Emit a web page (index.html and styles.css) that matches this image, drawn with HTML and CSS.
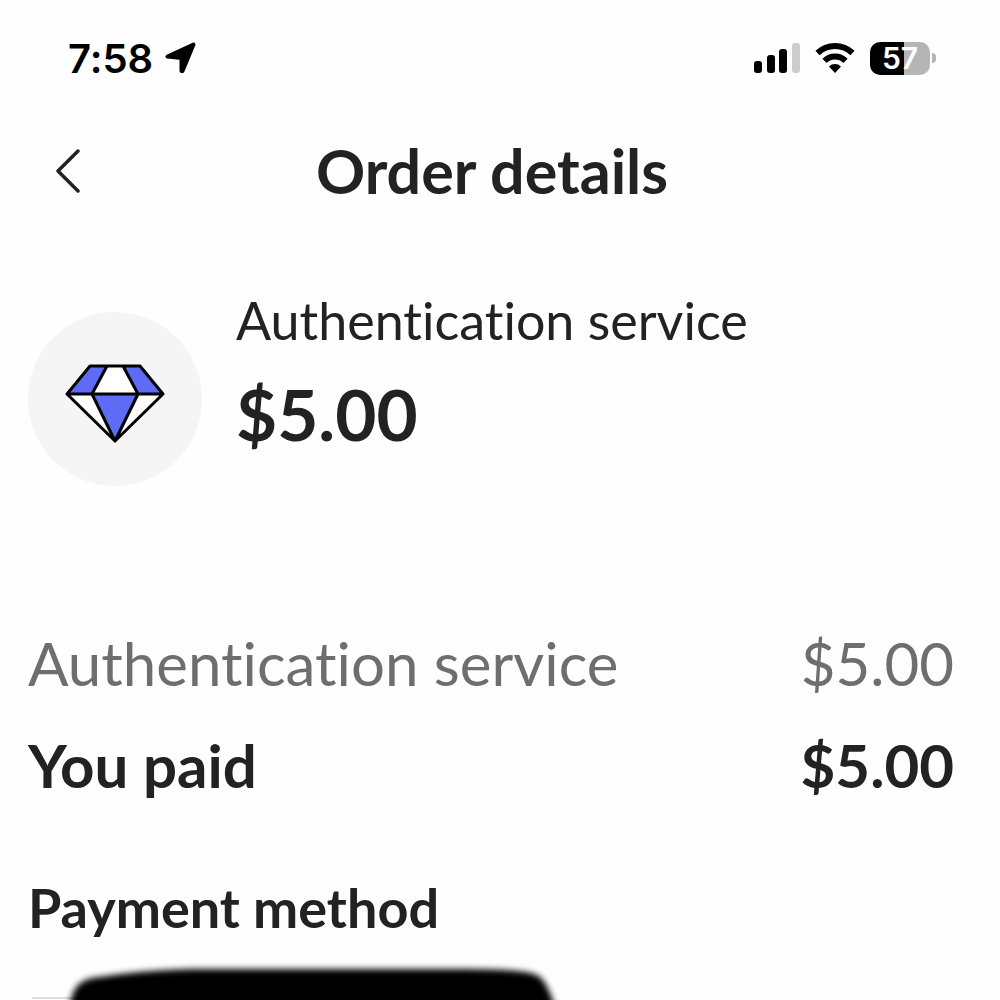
FILE: index.html
```html
<!DOCTYPE html>
<html lang="en">
<head>
    <meta charset="UTF-8">
    <meta name="viewport" content="width=device-width, initial-scale=1.0">
    <title>Order details</title>
    <link rel="stylesheet" href="styles.css">
</head>
<body>
    <div class="status-bar">
        <div class="status-left">
            <span class="time">7:58</span>
            <svg class="location-icon" width="32" height="32" viewBox="0 0 32 32">
                <path d="M2.500 14.500 L28.500 2.500 L17.500 29 L16.500 29 L16.500 16 Z" fill="#000" stroke="#000" stroke-width="4" stroke-linejoin="round"/>
            </svg>
        </div>
        <div class="status-right">
            <svg width="46" height="30" viewBox="0 0 46 30">
                <rect x="0" y="18" width="8" height="12" rx="3"/>
                <rect x="13" y="12" width="8" height="18" rx="3"/>
                <rect x="25" y="6" width="8" height="24" rx="3"/>
                <rect x="38" y="0" width="8" height="30" rx="3" fill="#ccc"/>
            </svg>
            <svg width="40" height="30" viewBox="0 0 40 30">
                <path d="M2.500 10 A25.500 25.500 0 0 1 37.500 10" fill="none" stroke="#000" stroke-width="6"/>
                <path d="M9.500 17.800 A15 15 0 0 1 30.500 17.800" fill="none" stroke="#000" stroke-width="6"/>
                <path d="M14 23.500 A8.500 8.500 0 0 1 26 23.500 L20 30 Z"/>
            </svg>
            <div class="battery">
                <span class="battery-level">57</span>
                <span class="battery-cap"></span>
            </div>
        </div>
    </div>

    <header class="header">
        <button class="back" type="button" aria-label="Back">
            <svg width="26" height="44" viewBox="0 0 26 44">
                <path d="M24 2 L4 22 L24 42" fill="none" stroke="#222" stroke-width="3.500" stroke-linecap="round" stroke-linejoin="round"/>
            </svg>
        </button>
        <h1>Order details</h1>
    </header>

    <main>
        <section class="summary">
            <div class="summary-icon">
                <svg width="100" height="80" viewBox="0 0 100 80">
                    <path d="M2 30 L25 2 H75 L98 30 L50 77 Z" fill="#fff"/>
                    <path d="M2 30 L25 2 H42 L27 30 Z M58 2 H75 L98 30 H73 Z M27 30 H73 L50 77 Z" fill="#5d6bf5"/>
                    <path d="M2 30 L25 2 H75 L98 30 L50 77 Z M2 30 H98 M42 2 L27 30 L50 77 L73 30 L58 2" fill="none" stroke="#000" stroke-width="3" stroke-linejoin="round"/>
                </svg>
            </div>
            <div class="summary-text">
                <p class="service">Authentication service</p>
                <p class="price">$5.00</p>
            </div>
        </section>

        <dl class="totals">
            <div class="row">
                <dt>Authentication service</dt>
                <dd>$5.00</dd>
            </div>
            <div class="row paid">
                <dt>You paid</dt>
                <dd>$5.00</dd>
            </div>
        </dl>

        <section class="payment">
            <h2>Payment method</h2>
            <!-- card details are blacked out -->
            <svg class="hidden-card" width="560" height="80" viewBox="0 0 560 80">
                <defs>
                    <filter id="soft" x="-10%" y="-20%" width="120%" height="140%">
                        <feGaussianBlur stdDeviation="3"/>
                    </filter>
                </defs>
                <path d="M0 58 H50" stroke="#ddd" stroke-width="2"/>
                <path d="M37 70 C40 48 46 42 60 38 Q110 30 160 29 H420 C490 29 500 32 508 37 Q516 44 524 70 V100 H37 Z" filter="url(#soft)"/>
            </svg>
        </section>
    </main>
</body>
</html>
```

FILE: styles.css
```css
* {
    box-sizing: border-box;
}
body {
    margin: 0;
    background-color: #fefefe;
    color: #222;
    font-family: Lato, sans-serif;
    font-variant-ligatures: none;
}
h1, h2, p, dl, dd {
    margin: 0;
}
svg {
    display: block;
}
.status-bar {
    display: flex;
    justify-content: space-between;
    align-items: center;
    height: 116px;
    padding: 0 64px 0 68px;
    color: #000;
    font-family: Inter, sans-serif;
}
.status-left {
    display: flex;
    align-items: center;
    gap: 12px;
}
.time {
    font-size: 40px;
    font-weight: 600;
}
.status-right {
    display: flex;
    align-items: center;
    gap: 15px;
}
.battery {
    display: flex;
    align-items: center;
    gap: 2px;
}
.battery-level {
    width: 60px;
    border-radius: 10px;
    background: linear-gradient(to right, #000 57%, #b5b5b5 57%);
    color: #fff;
    font-size: 30px;
    font-weight: 600;
    line-height: 33px;
    text-align: center;
}
.battery-cap {
    width: 4px;
    height: 10px;
    border-radius: 0 4px 4px 0;
    background-color: #b5b5b5;
}
.header {
    display: grid;
    grid-template-columns: 80px 1fr 80px;
    align-items: center;
    height: 110px;
    padding: 0 24px 0 8px;
}
.back {
    display: flex;
    justify-content: flex-end;
    padding: 8px;
    border: none;
    background: none;
    cursor: pointer;
}
.header h1 {
    font-size: 61px;
    font-weight: 700;
    line-height: 72px;
    text-align: center;
}
main {
    padding: 56px 46px 0 28px;
}
.summary {
    display: flex;
    align-items: center;
    gap: 34px;
}
.summary-icon {
    display: flex;
    justify-content: center;
    align-items: center;
    width: 174px;
    height: 174px;
    margin-top: 30px;
    padding-top: 10px;
    border-radius: 50%;
    background-color: #f5f5f5;
}
.service {
    font-size: 52px;
    line-height: 60px;
}
.price {
    font-size: 71px;
    font-weight: 700;
    line-height: 128px;
}
.totals {
    margin-top: 126px;
}
.row {
    display: flex;
    justify-content: space-between;
    color: #6e6e6e;
    font-size: 60px;
    line-height: 102px;
}
.paid {
    color: #222;
    font-weight: 700;
}
.payment {
    margin-top: 60px;
}
.payment h2 {
    font-size: 54px;
    font-weight: 700;
    line-height: 64px;
}
.hidden-card {
    margin-left: 4px;
}
```
